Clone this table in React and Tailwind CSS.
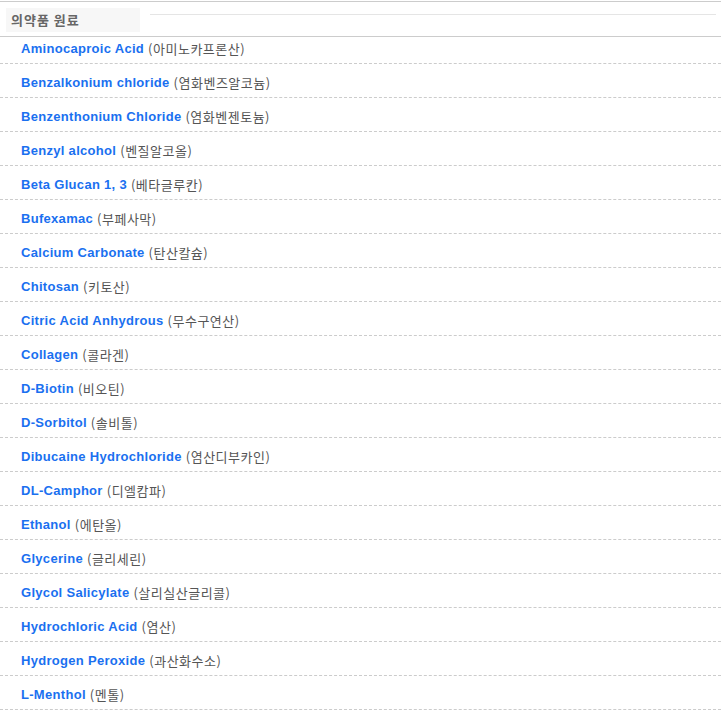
const ITEMS = [
  ['Aminocaproic Acid', '아미노카프론산'],
  ['Benzalkonium chloride', '염화벤즈알코늄'],
  ['Benzenthonium Chloride', '염화벤젠토늄'],
  ['Benzyl alcohol', '벤질알코올'],
  ['Beta Glucan 1, 3', '베타글루칸'],
  ['Bufexamac', '부페사막'],
  ['Calcium Carbonate', '탄산칼슘'],
  ['Chitosan', '키토산'],
  ['Citric Acid Anhydrous', '무수구연산'],
  ['Collagen', '콜라겐'],
  ['D-Biotin', '비오틴'],
  ['D-Sorbitol', '솔비톨'],
  ['Dibucaine Hydrochloride', '염산디부카인'],
  ['DL-Camphor', '디엘캄파'],
  ['Ethanol', '에탄올'],
  ['Glycerine', '글리세린'],
  ['Glycol Salicylate', '살리실산글리콜'],
  ['Hydrochloric Acid', '염산'],
  ['Hydrogen Peroxide', '과산화수소'],
  ['L-Menthol', '멘톨'],
]

export default function App() {
  return (
    <div className="w-[726px] h-[714px] bg-white overflow-hidden font-['Liberation_Sans','Noto_Sans_CJK_KR',sans-serif]">
      <div className="w-[721px] mt-px border-t border-[#cccccc]">
        <div className="flex items-center h-[35px] border-b border-[#cccccc]">
          <div className="ml-[6px] mt-[2px] w-[134px] h-[24px] bg-[#f7f7f7] flex items-center pl-[5px] text-[13px] font-bold tracking-[1px] text-[#666666] font-['Noto_Sans_CJK_KR',sans-serif]">
            의약품 원료
          </div>
          <div className="ml-[10px] mt-[-10px] flex-1 mr-[5px] border-t border-[#e5e5e5]" />
        </div>
        <ul>
          {ITEMS.map(([en, ko], i) => (
            <li
              key={en}
              className={`flex items-start pl-[21px] border-b border-dashed border-[#cccccc] ${i === 0 ? 'h-[27px] pt-[4px]' : 'h-[34px] pt-[11px]'}`}
            >
              <span className="text-[13px] leading-[16px] font-bold text-[#1a70f0] tracking-[0.3px]">{en}</span>
              <span className="ml-[4px] text-[13px] leading-[16px] tracking-[0.5px] text-[#555555] font-['Noto_Sans_CJK_KR',sans-serif]">({ko})</span>
            </li>
          ))}
        </ul>
      </div>
    </div>
  )
}
